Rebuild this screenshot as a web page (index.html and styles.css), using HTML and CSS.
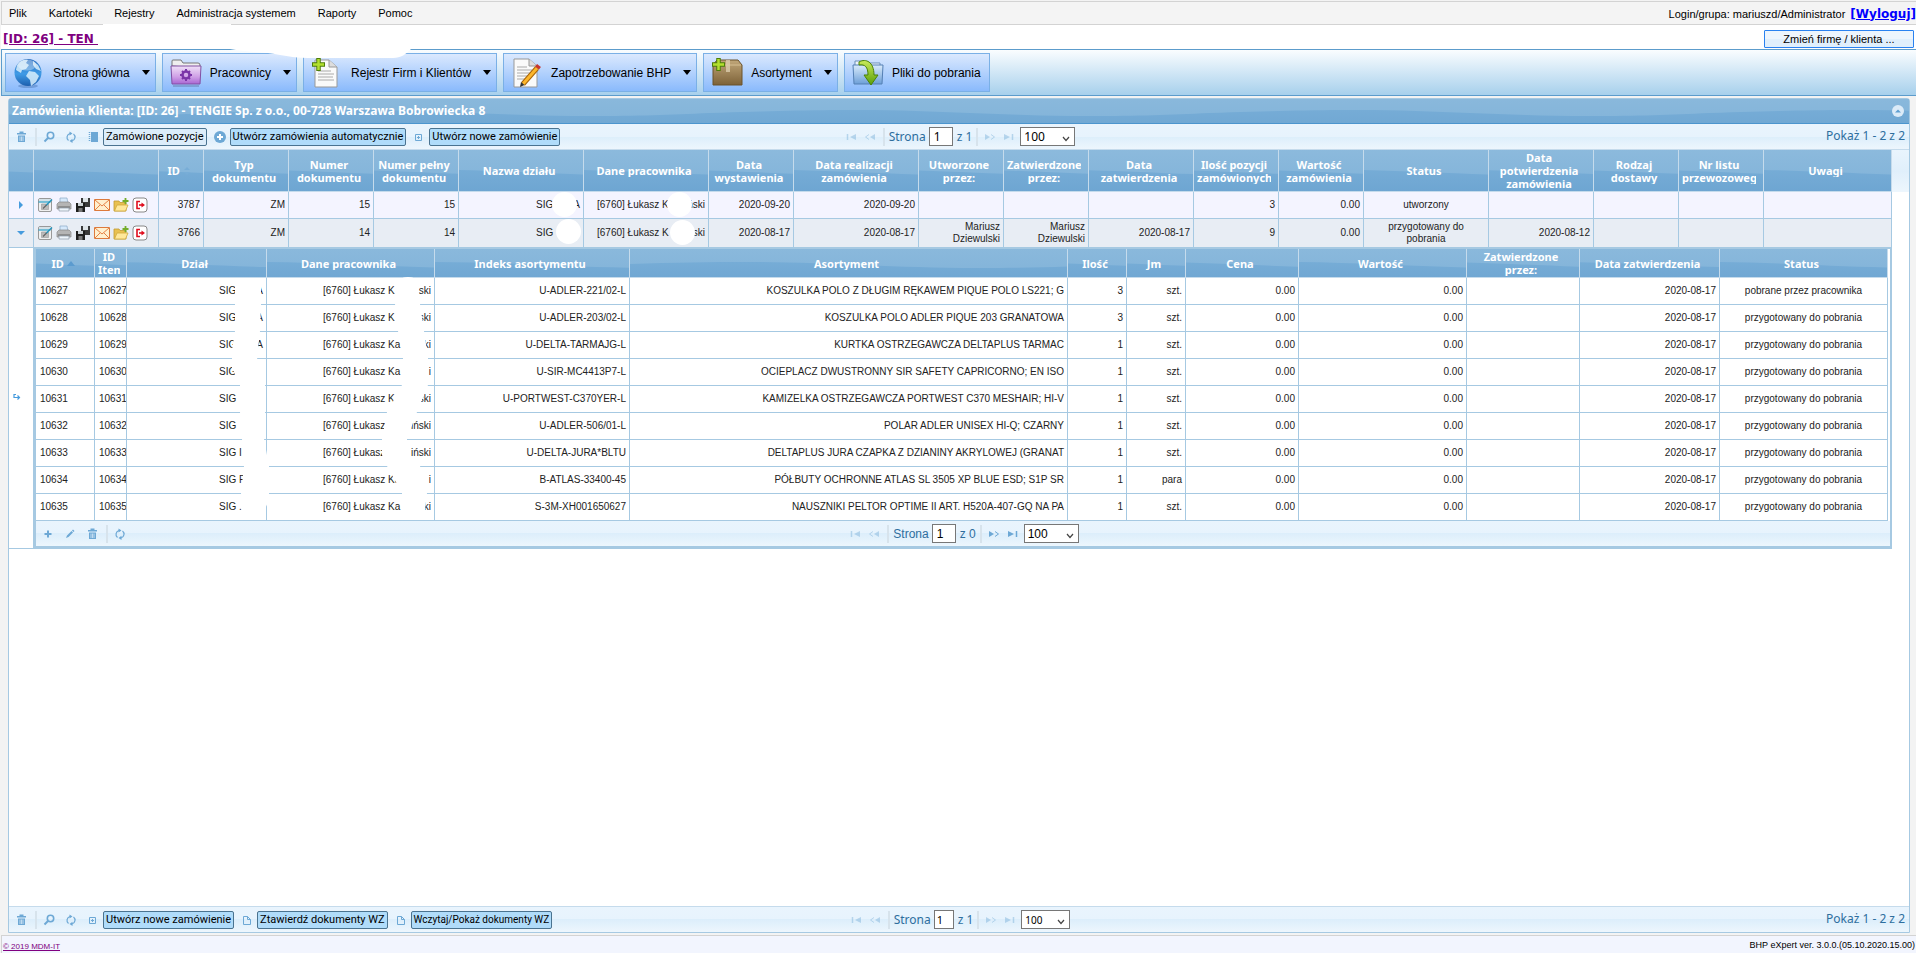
FILE: index.html
```html
<!DOCTYPE html>
<html lang="pl">
<head>
<meta charset="utf-8">
<title>BHP eXpert</title>
<link rel="stylesheet" href="styles.css">
</head>
<body>
<svg class="sprite" aria-hidden="true">
  <defs>
    <linearGradient id="g-globe" x1="0" y1="0" x2="0" y2="1"><stop offset="0" stop-color="#2b6fc0"/><stop offset=".55" stop-color="#3f9be6"/><stop offset="1" stop-color="#1d5fae"/></linearGradient>
    <linearGradient id="g-purple" x1="0" y1="0" x2="0" y2="1"><stop offset="0" stop-color="#efe0f7"/><stop offset=".6" stop-color="#cf9fe6"/><stop offset="1" stop-color="#a865d3"/></linearGradient>
    <linearGradient id="g-box" x1="0" y1="0" x2="0" y2="1"><stop offset="0" stop-color="#c0a679"/><stop offset="1" stop-color="#7d6238"/></linearGradient>
    <linearGradient id="g-blue" x1="0" y1="0" x2="0" y2="1"><stop offset="0" stop-color="#d9ebfb"/><stop offset="1" stop-color="#6d9fd8"/></linearGradient>
    <linearGradient id="g-green" x1="0" y1="0" x2="0" y2="1"><stop offset="0" stop-color="#c9ea5a"/><stop offset="1" stop-color="#5a9f08"/></linearGradient>
  </defs>
  <symbol id="trash" viewBox="0 0 16 16"><path d="M4 4h9v1.500H4zM6.500 2.500h4V4h-4zM5 6.500h7V13H5z" fill="currentColor"/><path d="M7 7.500v4.500M8.500 7.500v4.500M10 7.500v4.500" stroke="#e4f1fc" stroke-width=".7"/></symbol>
  <symbol id="search" viewBox="0 0 16 16"><circle cx="9.500" cy="6.500" r="3.200" fill="none" stroke="currentColor" stroke-width="1.600"/><path d="M7 9L3.500 12.500" stroke="currentColor" stroke-width="2"/></symbol>
  <symbol id="refresh" viewBox="0 0 16 16"><path d="M7 4.500A4 4 0 0 0 5.500 11.500M9 12A4 4 0 0 0 10.500 5" fill="none" stroke="currentColor" stroke-width="1.200"/><path d="M6.500 2.500l3 2-3 2zM9.500 9.800l-3 2.200 3 2z" fill="currentColor"/></symbol>
  <symbol id="book" viewBox="0 0 16 16"><path d="M6 3h7v10H6z" fill="currentColor"/><path d="M4.500 3v10" stroke="currentColor" stroke-width="1.500" stroke-dasharray="1 1"/></symbol>
  <symbol id="plusc" viewBox="0 0 16 16"><circle cx="8" cy="8" r="6" fill="currentColor"/><path d="M8 5v6M5 8h6" stroke="#fff" stroke-width="2"/></symbol>
  <symbol id="plusbox" viewBox="0 0 16 16"><path d="M4.500 5.500h6v6h-6zM7.500 7v3M6 8.500h3" fill="none" stroke="currentColor"/></symbol>
  <symbol id="doc" viewBox="0 0 16 16"><path d="M4.500 4.500h4l3 3v5h-7zM8.500 4.500v3h3" fill="none" stroke="currentColor"/></symbol>
  <symbol id="plus" viewBox="0 0 16 16"><path d="M8 4.500v7M4.500 8h7" stroke="currentColor" stroke-width="2"/></symbol>
  <symbol id="pencil" viewBox="0 0 16 16"><path d="M4 12l1-2.500 4.500-4.500 1.500 1.500-4.500 4.500zM10 4.500l1-1 1.500 1.500-1 1z" fill="currentColor"/></symbol>
  <symbol id="first" viewBox="0 0 16 16"><path d="M4.500 5v6" stroke="currentColor" stroke-width="1.500"/><path d="M13 5v6L7 8z" fill="currentColor"/></symbol>
  <symbol id="prev" viewBox="0 0 16 16"><path d="M7 5.500L3.500 8 7 10.500" fill="none" stroke="currentColor"/><path d="M13 5v6L8 8z" fill="currentColor"/></symbol>
  <symbol id="next" viewBox="0 0 16 16"><path d="M9 5.500L12.500 8 9 10.500" fill="none" stroke="currentColor"/><path d="M3 5v6l5-3z" fill="currentColor"/></symbol>
  <symbol id="last" viewBox="0 0 16 16"><path d="M11.500 5v6" stroke="currentColor" stroke-width="1.500"/><path d="M3 5v6l6-3z" fill="currentColor"/></symbol>
  <symbol id="edit" viewBox="0 0 16 16"><rect x="1.500" y="1.500" width="13" height="13" rx="1.500" fill="#f0f0f0" stroke="#999"/><path d="M2 2h12v2.500H2z" fill="#d5e2e8"/><path d="M1.500 5h12" stroke="#2aa0c8" stroke-width="1.200"/><path d="M4.500 7h7v5.500h-7z" fill="#bbb" stroke="#999" stroke-width=".6"/><path d="M9 8.500l6-6" stroke="#2394bd" stroke-width="1.400"/><path d="M6 11.500l3.500-3.500" stroke="#666" stroke-width="1.200"/></symbol>
  <symbol id="print" viewBox="0 0 16 16"><path d="M4 1h7l1 6H4z" fill="#d6e9fb" stroke="#8ba9c5" stroke-width=".7"/><path d="M1 7l2-2h10l2 2v5H1z" fill="#b5b5b5" stroke="#888" stroke-width=".7"/><path d="M2 10h12" stroke="#666"/><path d="M3 11h10v3H3z" fill="#eef5fb" stroke="#8a9aa8" stroke-width=".7"/></symbol>
  <symbol id="saveall" viewBox="0 0 16 16"><path d="M6 1h9v9H6z" fill="#3a3a3a"/><path d="M8 1h5v4H8z" fill="#dfe5e8"/><path d="M1 6h9v9H1z" fill="#1e1e1e"/><path d="M3 6h5v3H3z" fill="#ccd2d6"/><path d="M3.500 11h4v4h-4z" fill="#777"/></symbol>
  <symbol id="mail" viewBox="0 0 16 16"><path d="M.5 2.500h15v11H.5z" fill="#fff0cf" stroke="#dd7a3c"/><path d="M1 3l7 6 7-6M1 13l5-5M15 13l-5-5" fill="none" stroke="#e58144"/></symbol>
  <symbol id="folder" viewBox="0 0 16 16"><path d="M1 4h5l1 1.500h6V14H1z" fill="#e9c150" stroke="#c09a30" stroke-width=".8"/><path d="M1.500 14L4 8h11l-2.500 6z" fill="#ffe89a" stroke="#cfa93c" stroke-width=".8"/><path d="M12.500 1v6M9.500 4h6" stroke="#74ad2a" stroke-width="1.800"/></symbol>
  <symbol id="exit" viewBox="0 0 16 16"><rect x="1" y="1" width="14" height="14" rx="3" fill="#fff" stroke="#888"/><path d="M8 4.500H5v7h3" fill="none" stroke="#e00c1c" stroke-width="1.600"/><path d="M7 8h3" stroke="#e00c1c" stroke-width="1.600"/><path d="M9.500 5.500L13 8l-3.500 2.500z" fill="#e00c1c"/></symbol>
</svg>

<header class="menubar">
  <nav class="menu">
    <a href="#">Plik</a><a href="#">Kartoteki</a><a href="#">Rejestry</a><a href="#">Administracja systemem</a><a href="#">Raporty</a><a href="#">Pomoc</a>
  </nav>
  <div class="login">Login/grupa: mariuszd/Administrator <a href="#">[Wyloguj]</a></div>
</header>
<div class="client">
  <a href="#">[ID: 26] - TEN&nbsp;</a>
  <button type="button">Zmień firmę / klienta ...</button>
</div>
<nav class="ribbon">
  <svg class="ribbon-mask" viewBox="0 0 308 34" aria-hidden="true"><path d="M0 0H128V25H308C303 30 298 34 290 34H205C190 34 180 31 165 29C150 28 138 27 127 25H0Z" fill="#fff"/></svg>
  <button type="button" class="caret"><svg viewBox="0 0 32 32"><ellipse cx="15" cy="29" rx="10" ry="2" fill="#3c68a8" opacity=".4"/><circle cx="15" cy="15.500" r="13.500" fill="url(#g-globe)"/><path d="M4 8C7 3 12 2 15 3l-2 3 3 2-3 4-4 1-1 3-5-3zM16 14l6 1 4 4-3 6-5 4-1-6-4-4zM20 4l5 4 3 6-5-2-3-4z" fill="#d8effc" opacity=".85"/><ellipse cx="14" cy="8" rx="9" ry="5.500" fill="#fff" opacity=".35"/></svg>Strona główna</button>
  <button type="button" class="caret"><svg viewBox="0 0 32 32"><path d="M2 9V4q0-1 1-1h8l2 3h15q2 0 2 2v3z" fill="#eee" stroke="#777"/><path d="M1 9h30l-1 18H2z" fill="url(#g-purple)" stroke="#8250a3"/><path d="M3 29h26" stroke="#3c4468" opacity=".5"/><circle cx="16" cy="18" r="3.500" fill="none" stroke="#7b35a8" stroke-width="2.500"/><path d="M16 12v2M16 22v2M10 18h2M20 18h2M12 14l1.500 1.500M18.500 20.500L20 22M20 14l-1.500 1.500M13.500 20.500L12 22" stroke="#7b35a8" stroke-width="2"/></svg>Pracownicy</button>
  <button type="button" class="caret"><svg viewBox="0 0 32 32"><path d="M4 3h14l8 7v20H4z" fill="#fafafa" stroke="#999"/><path d="M18 3v7h8" fill="#ddd" stroke="#999"/><path d="M7 14h13M7 17h16M7 20h15M7 23h16" stroke="#aaa"/><path d="M7.500 1v13M1 7.500h13" stroke="#4d7d08" stroke-width="4.500"/><path d="M7.500 2v11M2 7.500h11" stroke="#b3e02e" stroke-width="2.500"/></svg>Rejestr Firm i Klientów</button>
  <button type="button" class="caret"><svg viewBox="0 0 32 32"><path d="M3 2h15l8 7v21H3z" fill="#fafafa" stroke="#999"/><path d="M18 2v7h8" fill="#ddd" stroke="#999"/><path d="M6 10h10M6 13h15M6 16h14M6 19h12M6 22h8" stroke="#aaa"/><path d="M12 27L26 11" stroke="#a86408" stroke-width="5"/><path d="M12 27L26 11" stroke="#fcb62c" stroke-width="3"/><path d="M26 11l2-2.500" stroke="#c8362e" stroke-width="5"/><path d="M9 30l1-5 3.500 3z" fill="#333"/></svg>Zapotrzebowanie BHP</button>
  <button type="button" class="caret"><svg viewBox="0 0 32 32"><path d="M2 8l4-5h21l4 5v20H2z" fill="url(#g-box)" stroke="#6b522b"/><path d="M3 8h27" stroke="#d6bf93"/><path d="M15 3h4v12h-4z" fill="#dccdae" opacity=".8"/><path d="M7.500 1v13M1 7.500h13" stroke="#4d7d08" stroke-width="4.500"/><path d="M7.500 2v11M2 7.500h11" stroke="#b3e02e" stroke-width="2.500"/></svg>Asortyment</button>
  <button type="button"><svg viewBox="0 0 32 32"><path d="M3 9V4h9l2 2h14v4z" fill="#eef4fa" stroke="#6b8fb8"/><path d="M1 8h30l-1 19H2z" fill="url(#g-blue)" stroke="#5580b4"/><path d="M7 5C14 1 22 5 22 18h4l-7 10-7-10h4C16 10 13 7 7 8z" fill="url(#g-green)" stroke="#4b8206"/></svg>Pliki do pobrania</button>
</nav>

<main class="grid">
  <div class="title"><h1>Zamówienia Klienta: [ID: 26] - TENGIE Sp. z o.o., 00-728 Warszawa Bobrowiecka 8</h1>
    <button type="button" aria-label="Zwiń"><svg viewBox="0 0 12 12"><circle cx="6" cy="6" r="6" fill="#dcebf8"/><path d="M3 7.500h6L6 4.500z" fill="#5e9fd1"/></svg></button></div>
  <div class="bar">
    <div class="tools">
      <svg class="i"><use href="#trash"/></svg><i class="sep"></i><svg class="i"><use href="#search"/></svg><svg class="i"><use href="#refresh"/></svg>
      <svg class="i"><use href="#book"/></svg><button type="button" class="pale">Zamówione pozycje</button>
      <svg class="i"><use href="#plusc"/></svg><button type="button">Utwórz zamówienia automatycznie</button>
      <svg class="i"><use href="#plusbox"/></svg><button type="button">Utwórz nowe zamówienie</button>
    </div>
    <div class="pager">
      <svg class="i off"><use href="#first"/></svg><svg class="i off"><use href="#prev"/></svg><i class="sep"></i>
      <label>Strona <input type="text" value="1"></label><span>z 1</span><i class="sep"></i>
      <svg class="i off"><use href="#next"/></svg><svg class="i off"><use href="#last"/></svg>
      <select aria-label="Wierszy"><option>100</option></select>
    </div>
    <div class="info">Pokaż 1 - 2 z 2</div>
  </div>

  <div class="orders-wrap">
  <table class="orders">
    <colgroup><col class="w25"><col class="w125"><col class="w45"><col class="w85"><col class="w85"><col class="w85"><col class="w125"><col class="w125"><col class="w85"><col class="w125"><col class="w85"><col class="w85"><col class="w105"><col class="w85"><col class="w85"><col class="w125"><col class="w105"><col class="w85"><col class="w85"><col></colgroup>
    <thead><tr>
      <th></th><th></th><th><div>ID <svg class="sort" viewBox="0 0 8 10"><path d="M1 4h6L4 1zM1 6h6L4 9z" fill="#78add7"/></svg></div></th><th><div>Typ<br>dokumentu</div></th><th><div>Numer<br>dokumentu</div></th><th><div>Numer pełny<br>dokumentu</div></th><th><div>Nazwa działu</div></th><th><div>Dane pracownika</div></th><th><div>Data<br>wystawienia</div></th><th><div>Data realizacji<br>zamówienia</div></th><th><div>Utworzone<br>przez:</div></th><th><div>Zatwierdzone<br>przez:</div></th><th><div>Data<br>zatwierdzenia</div></th><th><div>Ilość pozycji<br>zamówionych</div></th><th><div>Wartość<br>zamówienia</div></th><th><div>Status</div></th><th><div>Data<br>potwierdzenia<br>zamówienia</div></th><th><div>Rodzaj<br>dostawy</div></th><th><div>Nr listu<br>przewozowego</div></th><th><div>Uwagi</div></th>
    </tr></thead>
    <tbody>
    <tr class="r1">
      <td class="c"><svg class="tri" viewBox="0 0 8 8"><path d="M2 0v8l4-4z" fill="#469bdd"/></svg></td>
      <td class="acts"><div><svg><use href="#edit"/></svg><svg><use href="#print"/></svg><svg><use href="#saveall"/></svg><svg><use href="#mail"/></svg><svg><use href="#folder"/></svg><svg><use href="#exit"/></svg></div></td>
      <td>3787</td><td>ZM</td><td>15</td><td>15</td><td><div class="split dept"><span>SIG</span><span>A</span><b class="spot s1"></b></div></td><td><div class="split name"><span>[6760] Łukasz K</span><span>ński</span><b class="spot s2"></b></div></td><td>2020-09-20</td><td>2020-09-20</td><td></td><td></td><td></td><td>3</td><td>0.00</td><td class="c">utworzony</td><td></td><td></td><td></td><td></td>
    </tr>
    <tr class="r2">
      <td class="c"><svg class="tri" viewBox="0 0 8 8"><path d="M0 2h8L4 6z" fill="#469bdd"/></svg></td>
      <td class="acts"><div><svg><use href="#edit"/></svg><svg><use href="#print"/></svg><svg><use href="#saveall"/></svg><svg><use href="#mail"/></svg><svg><use href="#folder"/></svg><svg><use href="#exit"/></svg></div></td>
      <td>3766</td><td>ZM</td><td>14</td><td>14</td><td><div class="split dept"><span>SIG</span><b class="spot s3"></b></div></td><td><div class="split name"><span>[6760] Łukasz K</span><span>ski</span><b class="spot s4"></b></div></td><td>2020-08-17</td><td>2020-08-17</td><td>Mariusz<br>Dziewulski</td><td>Mariusz<br>Dziewulski</td><td>2020-08-17</td><td>9</td><td>0.00</td><td class="c">przygotowany do<br>pobrania</td><td>2020-08-12</td><td></td><td></td><td></td>
    </tr>
    <tr class="expand">
      <td class="hook"><svg class="tri" viewBox="0 0 8 8"><path d="M3 .5H1v3h5M4.500 1.500l2 2-2 2" fill="none" stroke="#469bdd" stroke-width="1.200"/></svg></td>
      <td colspan="19" class="holder">
        <div class="sub">
        <table class="items">
          <colgroup><col class="w59"><col class="w32"><col class="w140"><col class="w168"><col class="w195"><col><col class="w59"><col class="w59"><col class="w113"><col class="w168"><col class="w113"><col class="w140"><col class="w168"></colgroup>
          <thead><tr><th><div>ID <svg class="sort" viewBox="0 0 8 10"><path d="M0 7h8L4 2z" fill="#5b9bcf"/></svg></div></th><th><div>ID<br>Item</div></th><th><div>Dział</div></th><th><div>Dane pracownika</div></th><th><div>Indeks asortymentu</div></th><th><div>Asortyment</div></th><th><div>Ilość</div></th><th><div>Jm</div></th><th><div>Cena</div></th><th><div>Wartość</div></th><th><div>Zatwierdzone<br>przez:</div></th><th><div>Data zatwierdzenia</div></th><th><div>Status</div></th></tr></thead>
          <tbody>
          <tr><td>10627</td><td>10627</td><td><div class="split dept"><span>SIG</span><span>A</span></div></td><td><div class="split name"><span>[6760] Łukasz K</span><span>ski</span></div></td><td>U-ADLER-221/02-L</td><td>KOSZULKA POLO Z DŁUGIM RĘKAWEM PIQUE POLO LS221; G</td><td>3</td><td>szt.</td><td>0.00</td><td>0.00</td><td></td><td>2020-08-17</td><td>pobrane przez pracownika</td></tr>
          <tr><td>10628</td><td>10628</td><td><div class="split dept"><span>SIG</span><span>A</span></div></td><td><div class="split name"><span>[6760] Łukasz K</span><span>ski</span></div></td><td>U-ADLER-203/02-L</td><td>KOSZULKA POLO ADLER PIQUE 203 GRANATOWA</td><td>3</td><td>szt.</td><td>0.00</td><td>0.00</td><td></td><td>2020-08-17</td><td>przygotowany do pobrania</td></tr>
          <tr><td>10629</td><td>10629</td><td><div class="split dept"><span>SIG</span><span>A</span></div></td><td><div class="split name"><span>[6760] Łukasz Ka</span><span>ki</span></div></td><td>U-DELTA-TARMAJG-L</td><td>KURTKA OSTRZEGAWCZA DELTAPLUS TARMAC</td><td>1</td><td>szt.</td><td>0.00</td><td>0.00</td><td></td><td>2020-08-17</td><td>przygotowany do pobrania</td></tr>
          <tr><td>10630</td><td>10630</td><td><div class="split dept"><span>SIG</span></div></td><td><div class="split name"><span>[6760] Łukasz Ka</span><span>i</span></div></td><td>U-SIR-MC4413P7-L</td><td>OCIEPLACZ DWUSTRONNY SIR SAFETY CAPRICORNO; EN ISO</td><td>1</td><td>szt.</td><td>0.00</td><td>0.00</td><td></td><td>2020-08-17</td><td>przygotowany do pobrania</td></tr>
          <tr><td>10631</td><td>10631</td><td><div class="split dept"><span>SIG</span></div></td><td><div class="split name"><span>[6760] Łukasz K</span><span>ski</span></div></td><td>U-PORTWEST-C370YER-L</td><td>KAMIZELKA OSTRZEGAWCZA PORTWEST C370 MESHAIR; HI-V</td><td>1</td><td>szt.</td><td>0.00</td><td>0.00</td><td></td><td>2020-08-17</td><td>przygotowany do pobrania</td></tr>
          <tr><td>10632</td><td>10632</td><td><div class="split dept"><span>SIG</span></div></td><td><div class="split name"><span>[6760] Łukasz</span><span>iński</span></div></td><td>U-ADLER-506/01-L</td><td>POLAR ADLER UNISEX HI-Q; CZARNY</td><td>1</td><td>szt.</td><td>0.00</td><td>0.00</td><td></td><td>2020-08-17</td><td>przygotowany do pobrania</td></tr>
          <tr><td>10633</td><td>10633</td><td><div class="split dept"><span>SIG I</span></div></td><td><div class="split name"><span>[6760] Łukasz</span><span>iński</span></div></td><td>U-DELTA-JURA*BLTU</td><td>DELTAPLUS JURA CZAPKA Z DZIANINY AKRYLOWEJ (GRANAT</td><td>1</td><td>szt.</td><td>0.00</td><td>0.00</td><td></td><td>2020-08-17</td><td>przygotowany do pobrania</td></tr>
          <tr><td>10634</td><td>10634</td><td><div class="split dept"><span>SIG F</span></div></td><td><div class="split name"><span>[6760] Łukasz Ka</span><span>i</span></div></td><td>B-ATLAS-33400-45</td><td>PÓŁBUTY OCHRONNE ATLAS SL 3505 XP BLUE ESD; S1P SR</td><td>1</td><td>para</td><td>0.00</td><td>0.00</td><td></td><td>2020-08-17</td><td>przygotowany do pobrania</td></tr>
          <tr><td>10635</td><td>10635</td><td><div class="split dept"><span>SIG .</span><span>A</span></div></td><td><div class="split name"><span>[6760] Łukasz Ka</span><span>ki</span></div></td><td>S-3M-XH001650627</td><td>NAUSZNIKI PELTOR OPTIME II ART. H520A-407-GQ NA PA</td><td>1</td><td>szt.</td><td>0.00</td><td>0.00</td><td></td><td>2020-08-17</td><td>przygotowany do pobrania</td></tr>
          </tbody>
        </table>
        <svg class="smear" viewBox="230 276 200 244" aria-hidden="true"><path d="M235 279V331L232 350V368L240 385V412L242 439L244 466L241 493L242 518H261L269 500V466L264 439L265 412V385L262 372L257 358L260 331L261 304V279ZM395 285V304L398 331L403 358L402 385L395 398L387 412L382 439L382 455L387 466L402 493V518H424L427 493L420 466L407 452V439L417 412L428 385V358L424 331L420 304L418 285Z" fill="#fff"/><ellipse cx="408" cy="285" rx="11" ry="8" fill="#fff"/></svg>
        <div class="bar subbar">
          <div class="tools"><svg class="i"><use href="#plus"/></svg><svg class="i"><use href="#pencil"/></svg><svg class="i"><use href="#trash"/></svg><i class="sep"></i><svg class="i"><use href="#refresh"/></svg></div>
          <div class="pager">
            <svg class="i off"><use href="#first"/></svg><svg class="i off"><use href="#prev"/></svg><i class="sep"></i>
            <label>Strona <input type="text" value="1"></label><span>z 0</span><i class="sep"></i>
            <svg class="i"><use href="#next"/></svg><svg class="i"><use href="#last"/></svg>
            <select aria-label="Wierszy"><option>100</option></select>
          </div>
          <div class="info"></div>
        </div>
        </div>
      </td>
    </tr>
    </tbody>
  </table>
  </div>

  <div class="bar bottom">
    <div class="tools">
      <svg class="i"><use href="#trash"/></svg><i class="sep"></i><svg class="i"><use href="#search"/></svg><svg class="i"><use href="#refresh"/></svg>
      <svg class="i"><use href="#plusbox"/></svg><button type="button">Utwórz nowe zamówienie</button>
      <svg class="i"><use href="#doc"/></svg><button type="button">Ztawierdź dokumenty WZ</button>
      <svg class="i"><use href="#doc"/></svg><button type="button" class="small">Wczytaj/Pokaż dokumenty WZ</button>
    </div>
    <div class="pager">
      <svg class="i off"><use href="#first"/></svg><svg class="i off"><use href="#prev"/></svg><i class="sep"></i>
      <label>Strona <input type="text" value="1" class="slim"></label><span>z 1</span><i class="sep"></i>
      <svg class="i off"><use href="#next"/></svg><svg class="i off"><use href="#last"/></svg>
      <select aria-label="Wierszy" class="slim"><option>100</option></select>
    </div>
    <div class="info">Pokaż 1 - 2 z 2</div>
  </div>
</main>
<footer><a href="#">© 2019 MDM-IT</a><span>BHP eXpert ver. 3.0.0.(05.10.2020.15.00)</span></footer>
</body>
</html>
```

FILE: styles.css
```css
* { box-sizing: border-box; }
body {
  margin: 0; padding: 1px 0 0 1px; min-height: 100vh;
  display: flex; flex-direction: column;
  background: #f3f3f3; color: #222;
  font: 11px/12px "Liberation Sans", Arial, sans-serif;
}
button, input, select { font: inherit; margin: 0; }
.sprite { position: absolute; width: 0; height: 0; }

.menubar { display: flex; justify-content: space-between; align-items: center; height: 24px; padding-bottom: 1px; background: #f4f4f4; border: 1px solid #d3d3d3; border-right: 0; }
.menu { display: flex; gap: 22px; padding-left: 7px; font-size: 11px; }
.menu a { color: #000; text-decoration: none; }
.login { padding-top: 2px; font-size: 11px; color: #000; }
.login a { margin-left: 2px; font: bold 12px/14px "DejaVu Sans", Verdana, sans-serif; color: #00f; }

.client { display: flex; justify-content: space-between; align-items: center; height: 24px; padding: 0 2px; background: #fff; }
.client a { font: bold 12px/14px "DejaVu Sans", Verdana, sans-serif; color: #800080; padding-top: 4px; }
.client button { width: 150px; height: 18px; margin-top: 3px; padding: 0; border: 1px solid #2a82f0; border-radius: 1px; background: linear-gradient(#edf5fd 50%, #e0effc 50%); font-size: 11px; color: #000; }

.ribbon { position: relative; display: flex; gap: 6px; height: 47px; padding: 3px; border: 1px solid #5c9ccc; border-width: 1px 0 1px 1px; background: linear-gradient(#fafdff, #a7d0ec); }
.ribbon-mask { position: absolute; left: 101px; top: -26px; width: 308px; height: 34px; pointer-events: none; z-index: 1; }
.ribbon button { display: flex; align-items: center; height: 39px; padding: 0 8px 0 7px; border: 1px solid #7ab0e6; background: linear-gradient(#dbe9fe, #8abafc); font-size: 12px; color: #000; }
.ribbon button svg { width: 32px; height: 32px; margin-right: 8px; }
.ribbon .caret { padding-right: 5px; }
.caret::after { content: ""; margin-left: 12px; border: 4px solid transparent; border-top: 5px solid #000; border-bottom: 0; }

.grid { flex: 1; display: flex; flex-direction: column; margin: 2px 6px 0 7px; border: 1px solid #a6c9e2; background: #fff; font-family: "Noto Sans", "Open Sans", sans-serif; border-radius: 3px 3px 0 0; }
.title, th {
  background: #6fa7d2 url("data:image/svg+xml,%3Csvg xmlns='http://www.w3.org/2000/svg' width='500' height='100'%3E%3ClinearGradient id='a' x2='0' y2='1'%3E%3Cstop stop-color='%2394bfdf'/%3E%3Cstop offset='1' stop-color='%2378add6'/%3E%3C/linearGradient%3E%3ClinearGradient id='b' x2='0' y2='1'%3E%3Cstop stop-color='%2376acd6'/%3E%3Cstop offset='1' stop-color='%23639dcc'/%3E%3C/linearGradient%3E%3Cpath fill='url(%23a)' d='M0 0h500v100H0z'/%3E%3Cpath fill='url(%23b)' d='M0 52C60 50 100 49 150 49C230 49 290 55 380 55C430 55 460 54 500 52V100H0z'/%3E%3C/svg%3E") 50% 50% repeat-x;
  color: #fff;
}
.title { display: flex; justify-content: space-between; align-items: center; height: 25px; padding: 0 5px 0 3px; border-bottom: 1px solid #4b95ce; }
.title h1 { margin: 0; font-size: 12px; line-height: 16px; }
.title button { display: flex; padding: 0; border: 0; background: none; }
.title button svg { width: 12px; height: 12px; }

.bar { display: grid; grid-template-columns: 1fr auto 1fr; align-items: center; height: 26px; padding: 0 4px; background: linear-gradient(#e9f4fd, #e7f3fd 50%, #dceefb 50%, #edf6fd); border-bottom: 1px solid #c5dbec; color: #2e6e9e; font-size: 12px; line-height: 16px; }
.tools, .pager { display: flex; align-items: center; }
.i { width: 16px; height: 16px; color: #6da8d5; flex: none; margin-right: 6px; }
.off { opacity: .4; }
.sep { width: 2px; height: 18px; background: #d7e3ec; margin: 0 4px 0 0; }
.tools button { height: 18px; margin: 0 5px 0 -4px; padding: 0 2px; border: 1px solid #4a7390; border-radius: 2px; background: #b0dcfa; color: #000; font: 11px/14px Roboto, "Open Sans", sans-serif; white-space: nowrap; }
.tools button.pale { background: #dcedfa; }
.tools button.small { font-size: 10px; }
.pager { gap: 2px; }
.pager .i { margin-right: 1px; }
.pager .sep { margin: 0 2px; }
.pager label { display: flex; align-items: center; gap: 3px; }
.pager input { width: 24px; height: 19px; padding: 0 4px; border: 1px solid #777; color: #000; background: #fff; }
.pager span { margin-left: 2px; }
.pager input.slim { width: 20px; font-size: 11px; padding: 0 2px; }
.pager select { width: 55px; height: 19px; padding: 0 3px; border: 1px solid #777; border-radius: 0; color: #000; appearance: none; background: #fff url("data:image/svg+xml,%3Csvg xmlns='http://www.w3.org/2000/svg' width='8' height='6'%3E%3Cpath d='M1 1l3 3.500 3-3.500' fill='none' stroke='%23444' stroke-width='1.200'/%3E%3C/svg%3E") no-repeat right 4px top 8px; }
.pager select.slim { width: 49px; font-size: 10px; }
.info { text-align: right; padding-bottom: 1px; }

.orders-wrap { flex: 1; padding-right: 17px; background: linear-gradient(#e9f4fd, #e0effb 50%, #edf6fd) no-repeat 0 0 / 100% 42px; }
table { width: 100%; table-layout: fixed; border-collapse: separate; border-spacing: 0; font: 10px/12px "Liberation Sans", Arial, sans-serif; }
th { height: 42px; padding: 0 7px 0 3px; border-right: 1px solid #c5dbec; border-bottom: 1px solid #c5dbec; font: bold 11px/13px "Noto Sans", "Open Sans", sans-serif; text-align: center; }
th div { overflow: hidden; white-space: nowrap; }
td { padding: 0 3px; border-right: 1px solid #a6c9e2; border-bottom: 1px solid #a6c9e2; text-align: right; white-space: nowrap; }
.c { text-align: center; }
.w25 { width: 25px; } .w45 { width: 45px; } .w85 { width: 85px; } .w105 { width: 105px; } .w125 { width: 125px; }
.w32 { width: 32px; } .w59 { width: 59px; } .w113 { width: 113px; } .w140 { width: 140px; } .w168 { width: 168px; } .w195 { width: 195px; }
.sort { width: 8px; height: 10px; vertical-align: -1px; }
.r1 td { height: 27px; background: #f4f4ff; }
.r2 td { height: 29px; background: #e8edf4; }
.tri { width: 8px; height: 8px; vertical-align: middle; }
.acts div { display: flex; gap: 3px; }
.acts svg { width: 16px; height: 16px; }
.split { position: relative; display: flex; justify-content: space-between; margin-left: auto; }
.dept { width: 44px; }
.name { width: 108px; }
.spot { position: absolute; width: 25px; height: 25px; border-radius: 50%; background: #fff; top: -7px; }
.s1 { left: 16px; } .s2 { left: 70px; } .s3 { left: 20px; top: -8px; } .s4 { left: 73px; }
.expand > td { border-bottom-color: #a6c9e2; background: #fff; }
.hook { text-align: left; padding-left: 4px; }
.expand > .holder { padding: 0; border-right: 0; }
.sub { position: relative; border: 1px solid #a6c9e2; border-width: 1px 2px 1px 2px; }
.items { width: calc(100% - 2px); }
.items th { height: 29px; }
.items td { height: 27px; overflow: hidden; }
.items td:nth-child(-n+2) { text-align: left; padding: 0 0 0 4px; }
.items td:last-child { text-align: center; }
.items th:nth-child(2) { padding-right: 6px; }
.smear { position: absolute; left: 194px; top: 27px; width: 200px; height: 244px; pointer-events: none; }
.subbar { border-bottom-color: #a6c9e2; }
.bottom { border-top: 1px solid #c5dbec; border-bottom: 0; }

footer { display: flex; justify-content: space-between; align-items: center; height: 18px; margin-top: 2px; padding: 0 1px; border: 1px solid #d3d3d3; border-width: 1px 0 0 1px; background: #f2f5fe; color: #000; font-size: 9px; }
footer a { color: #800080; font-size: 8px; padding-top: 4px; }
```
